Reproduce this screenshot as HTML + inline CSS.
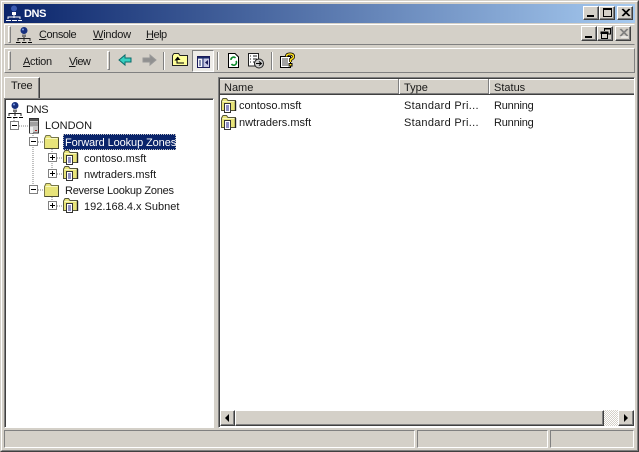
<!DOCTYPE html>
<html><head><meta charset="utf-8"><style>
html,body{margin:0;padding:0;width:639px;height:452px;overflow:hidden;background:#d4d0c8}
*{box-sizing:border-box}
body{position:relative;font:11px/13px "Liberation Sans",sans-serif;color:#000}
.a{position:absolute}
.t{position:absolute;white-space:nowrap;font-size:11px;line-height:13px;color:#181818}
u{text-decoration:underline}
.up{border:1px solid;border-color:#fff #808080 #808080 #fff}
.dn{border:1px solid;border-color:#808080 #fff #fff #808080}
.grip{position:absolute;width:3px;border:1px solid;border-color:#fff #808080 #808080 #fff}
.sep{position:absolute;width:2px;border-left:1px solid #808080;border-right:1px solid #fff}
.btn{position:absolute;background:#d4d0c8;border:1px solid;border-color:#fff #404040 #404040 #fff;box-shadow:inset -1px -1px 0 #808080}
svg{position:absolute;overflow:visible}
</style></head><body>
<svg width="0" height="0" style="position:absolute"><defs>
<g id="net"><circle cx="8" cy="3.5" r="3.5" fill="#17307e"/><circle cx="7" cy="2.5" r="1" fill="#7f9fe8"/><path d="M6 7.5H10V10H6Z" fill="#777"/><path d="M8 10V14M2 14V11.5H14V14" stroke="#222" fill="none"/><path d="M0 15.5H4.5M6 15.5H10.5M12 15.5H16" stroke="#000"/></g>
<g id="folder"><path d="M.5 3.5V13.5H14.5V2.5H7.5L6 .5H2Z" fill="#e8e47a" stroke="#77774a"/><path d="M1.5 3.5H13.5" stroke="#f8f8c0"/><path d="M14.5 3V13.5H1" stroke="#4a4a30" fill="none"/></g>
<g id="zone"><path d="M.5 3V12.5H14.5V2.5H7L5.5 .5H2Z" fill="#e8e47a" stroke="#55553a"/><path d="M1.5 3.5H13.5" stroke="#f8f8c0"/><path d="M14.5 3V13" stroke="#222" stroke-width="1.4"/><path d="M3.5 5.5H9.5V14.5H3.5Z" fill="#fff" stroke="#333"/><path d="M5 8H8M5 10H8M5 12H8" stroke="#22228a"/></g>
<g id="plus"><rect x=".5" y=".5" width="8" height="8" fill="#fff" stroke="#808080"/><path d="M2 4.5H7M4.5 2V7" stroke="#000"/></g>
<g id="minus"><rect x=".5" y=".5" width="8" height="8" fill="#fff" stroke="#808080"/><path d="M2 4.5H7" stroke="#000"/></g>
</defs></svg>

<!-- window edge -->
<div class="a" style="left:0;top:0;width:639px;height:452px;border:1px solid;border-color:#d4d0c8 #404040 #404040 #d4d0c8"></div>
<div class="a" style="left:1px;top:1px;width:637px;height:450px;border:1px solid;border-color:#fff #808080 #808080 #fff"></div>

<!-- title bar -->
<div class="a" style="left:4px;top:4px;width:631px;height:19px;background:linear-gradient(90deg,#0a246a 0%,#a6caf0 100%)"></div>
<svg style="left:6px;top:5px" width="16" height="16"><circle cx="8" cy="3.5" r="3" fill="#3a5ab0"/><path d="M6 7H10V10H6Z" fill="#fff"/><path d="M8 10V13M2 14V12H14V14" stroke="#fff" fill="none"/><path d="M0 15.5H5M6 15.5H11M12 15.5H16" stroke="#fff"/></svg>
<div class="t" style="left:24px;top:8px;color:#fff;font-weight:bold;letter-spacing:-.4px">DNS</div>
<div class="btn" style="left:583px;top:6px;width:16px;height:14px"><div class="a" style="left:3px;top:8px;width:7px;height:2px;background:#000"></div></div>
<div class="btn" style="left:599px;top:6px;width:16px;height:14px"><div class="a" style="left:3px;top:1px;width:9px;height:9px;border:1px solid #000;border-top-width:2px"></div></div>
<div class="btn" style="left:617px;top:6px;width:16px;height:14px"><svg style="left:3px;top:2px" width="9" height="8"><path d="M1 0L8 7M2 0L9 7M8 0L1 7M9 0L2 7" stroke="#000"/></svg></div>

<!-- menu bar -->
<div class="a up" style="left:4px;top:24px;width:631px;height:21px;border-right-color:#d4d0c8;border-bottom-color:#808080"></div>
<div class="grip" style="left:8px;top:26px;height:17px"></div>
<svg style="left:16px;top:27px" width="16" height="16"><use href="#net"/></svg>
<div class="t" style="left:39px;top:29px;letter-spacing:-.45px"><u>C</u>onsole</div>
<div class="t" style="left:93px;top:29px;letter-spacing:-.2px"><u>W</u>indow</div>
<div class="t" style="left:146px;top:29px;letter-spacing:-.5px"><u>H</u>elp</div>
<div class="btn" style="left:581px;top:26px;width:16px;height:15px"><div class="a" style="left:3px;top:9px;width:7px;height:2px;background:#000"></div></div>
<div class="btn" style="left:597px;top:26px;width:16px;height:15px"><svg style="left:3px;top:1px" width="10" height="10"><path d="M3.5 3V.5H9.5V6H7M3 1H9" stroke="#000" fill="none"/><path d="M.5 4.5H6.5V10.5H.5ZM0 4H7V5.5H0Z" stroke="#000" fill="none"/></svg></div>
<div class="btn" style="left:615px;top:26px;width:16px;height:15px"><svg style="left:3px;top:2px" width="9" height="8"><path d="M1 0L8 7M2 0L9 7M8 0L1 7M9 0L2 7" stroke="#808080"/><path d="M2 8L9 8" stroke="#fff"/></svg></div>

<!-- toolbar -->
<div class="a up" style="left:4px;top:48px;width:631px;height:25px;border-right-color:#808080"></div>
<div class="grip" style="left:8px;top:51px;height:19px"></div>
<div class="t" style="left:23px;top:56px;letter-spacing:-.3px"><u>A</u>ction</div>
<div class="t" style="left:69px;top:56px;letter-spacing:-.6px"><u>V</u>iew</div>
<div class="grip" style="left:107px;top:51px;height:19px"></div>
<svg style="left:118px;top:54px" width="16" height="14"><path d="M1 6L7 1V4H13V8H7V11Z" fill="#35d0c0" stroke="#0a6a6a"/></svg>
<svg style="left:141px;top:54px" width="16" height="14"><path d="M15 6L9 1V4H2V8H9V11Z" fill="#909090" stroke="#999"/></svg>
<div class="sep" style="left:163px;top:52px;height:18px"></div>
<svg style="left:172px;top:53px" width="16" height="13"><path d="M.5 2.5V12.5H15.5V2.5H8L6.5 .5H2Z" fill="#ffff99" stroke="#222"/><path d="M6 4L3.5 7H5V10H12" stroke="#000" fill="none"/><path d="M6 4L3.5 7H8.5Z" fill="#000"/></svg>
<div class="a" style="left:192px;top:50px;width:22px;height:22px;background:#eeece8;border:1px solid;border-color:#808080 #fff #fff #808080"></div>
<svg style="left:197px;top:56px" width="13" height="12"><rect x=".5" y=".5" width="12" height="11" fill="#c8c8e4" stroke="#1a1a5a"/><rect x="1" y="1" width="11" height="1.5" fill="#1a2a6a"/><rect x="5.5" y="2" width="1" height="9" fill="#1a2a6a"/><rect x="1" y="3" width="4" height="8" fill="#f4f4fa"/><path d="M2 5H4M2 7H4M2 9H4" stroke="#1a2a6a"/><path d="M11 4V9L8 6.5Z" fill="#1a1a5a"/></svg>
<div class="sep" style="left:217px;top:52px;height:18px"></div>
<svg style="left:228px;top:53px" width="11" height="15"><path d="M.5 .5H7L10.5 4V14.5H.5Z" fill="#fff" stroke="#000"/><path d="M3 7A2.6 2.6 0 0 1 7.5 5M8 8A2.6 2.6 0 0 1 3.5 11" stroke="#0a8a2a" stroke-width="1.6" fill="none"/></svg>
<svg style="left:248px;top:53px" width="16" height="15"><path d="M.5 .5H10.5V13H.5Z" fill="#fff" stroke="#222"/><path d="M2 3H3M5 3H9M2 6H3M5 6H9M2 9H3M5 9H7" stroke="#222"/><circle cx="11" cy="10.5" r="4.5" fill="#ccc" stroke="#222"/><path d="M8 10.5H13M11 8.5L13.5 10.5L11 12.5" stroke="#000" fill="none"/></svg>
<div class="sep" style="left:271px;top:52px;height:18px"></div>
<svg style="left:280px;top:53px" width="15" height="15"><path d="M.5 3.5H10.5V14.5H.5Z" fill="#fff" stroke="#000"/><path d="M2 6H8M2 8H8M2 10H8M2 12H8" stroke="#444"/><path d="M6.5 3.5Q6.5 1 10 1T13.5 3.5Q13.5 5.5 10.5 6.5V9" stroke="#000" stroke-width="3" fill="none"/><path d="M6.5 3.5Q6.5 1 10 1T13.5 3.5Q13.5 5.5 10.5 6.5V9" stroke="#ffe020" stroke-width="1.6" fill="none"/><path d="M9 10.5H12V13H9Z" fill="#ffe020" stroke="#000"/></svg>

<!-- tab -->
<div class="a" style="left:4px;top:77px;width:36px;height:22px;background:#d4d0c8;border:1px solid;border-color:#fff #404040 #d4d0c8 #fff;box-shadow:inset -1px 0 0 #808080"></div>
<div class="t" style="left:11px;top:80px;letter-spacing:-.2px">Tree</div>

<!-- tree pane -->
<div class="a" style="left:4px;top:98px;width:210px;height:330px;background:#fff;border:1px solid;border-color:#808080 #fff #fff #808080;box-shadow:inset 1px 1px 0 #404040"></div>
<div class="a" style="left:214px;top:98px;width:1px;height:330px;background:#d4d0c8"></div>
<!-- tree lines -->
<svg style="left:0;top:0" width="214" height="240"><path d="M14 118V121M19 126H28M33 131V190M38 142H44M38 190H44M52 147V174M57 158H63M57 174H63M52 195V201M57 206H63" stroke="#808080" stroke-dasharray="1 1" fill="none"/></svg>
<svg style="left:7px;top:102px" width="16" height="16"><use href="#net"/></svg>
<div class="t" style="left:26px;top:104px;letter-spacing:-.3px">DNS</div>
<svg style="left:10px;top:121px" width="9" height="9"><use href="#minus"/></svg>
<svg style="left:29px;top:118px" width="10" height="16"><rect x=".5" y=".5" width="9" height="14.5" fill="#c8c8c8" stroke="#333"/><rect x="1" y="1" width="8" height="2" fill="#555"/><path d="M1 5H9M1 7H9" stroke="#777"/><path d="M1 9H4V15H1Z" fill="#eee"/><rect x="6" y="12" width="2" height="1" fill="#b02020"/></svg>
<div class="t" style="left:45px;top:120px">LONDON</div>
<svg style="left:29px;top:137px" width="9" height="9"><use href="#minus"/></svg>
<svg style="left:44px;top:135px" width="16" height="15"><use href="#folder"/></svg>
<div class="a" style="left:63px;top:134px;width:113px;height:16px;background:#0a246a;outline:1px dotted #c0c0c0;outline-offset:-1px"></div>
<div class="t" style="left:65px;top:137px;color:#fff;letter-spacing:-.1px">Forward Lookup Zones</div>
<svg style="left:48px;top:153px" width="9" height="9"><use href="#plus"/></svg>
<svg style="left:63px;top:150px" width="16" height="16"><use href="#zone"/></svg>
<div class="t" style="left:84px;top:153px">contoso.msft</div>
<svg style="left:48px;top:169px" width="9" height="9"><use href="#plus"/></svg>
<svg style="left:63px;top:166px" width="16" height="16"><use href="#zone"/></svg>
<div class="t" style="left:84px;top:169px">nwtraders.msft</div>
<svg style="left:29px;top:185px" width="9" height="9"><use href="#minus"/></svg>
<svg style="left:44px;top:183px" width="16" height="15"><use href="#folder"/></svg>
<div class="t" style="left:65px;top:185px;letter-spacing:-.25px">Reverse Lookup Zones</div>
<svg style="left:48px;top:201px" width="9" height="9"><use href="#plus"/></svg>
<svg style="left:63px;top:198px" width="16" height="16"><use href="#zone"/></svg>
<div class="t" style="left:84px;top:201px">192.168.4.x Subnet</div>

<!-- list pane -->
<div class="a" style="left:218px;top:77px;width:417px;height:351px;background:#fff;border:1px solid;border-color:#808080 #fff #fff #808080;box-shadow:inset 1px 1px 0 #404040"></div>
<div class="a" style="left:220px;top:79px;width:414px;height:15px;background:#d4d0c8;border-top:1px solid #fff;border-bottom:1px solid #808080;box-shadow:0 1px 0 #404040"></div>
<div class="a" style="left:398px;top:79px;width:2px;height:15px;background:#808080;border-right:1px solid #fff"></div>
<div class="a" style="left:488px;top:79px;width:2px;height:15px;background:#808080;border-right:1px solid #fff"></div>
<div class="t" style="left:224px;top:82px">Name</div>
<div class="t" style="left:404px;top:82px">Type</div>
<div class="t" style="left:494px;top:82px">Status</div>
<svg style="left:221px;top:98px" width="16" height="16"><use href="#zone"/></svg>
<div class="t" style="left:239px;top:100px">contoso.msft</div>
<div class="t" style="left:404px;top:100px;letter-spacing:.3px">Standard Pri...</div>
<div class="t" style="left:494px;top:100px;letter-spacing:-.2px">Running</div>
<svg style="left:221px;top:115px" width="16" height="16"><use href="#zone"/></svg>
<div class="t" style="left:239px;top:117px">nwtraders.msft</div>
<div class="t" style="left:404px;top:117px;letter-spacing:.3px">Standard Pri...</div>
<div class="t" style="left:494px;top:117px;letter-spacing:-.2px">Running</div>

<!-- scrollbar -->
<div class="a" style="left:220px;top:410px;width:414px;height:16px;background-color:#ece9e4;background-image:repeating-conic-gradient(#d4d0c8 0 25%,#fff 0 50%);background-size:2px 2px"></div>
<div class="btn" style="left:220px;top:410px;width:15px;height:16px"><svg style="left:4px;top:3px" width="5" height="8"><path d="M4 0V8L0 4Z" fill="#000"/></svg></div>
<div class="btn" style="left:235px;top:410px;width:369px;height:16px"></div>
<div class="btn" style="left:618px;top:410px;width:16px;height:16px"><svg style="left:5px;top:3px" width="5" height="8"><path d="M0 0V8L4 4Z" fill="#000"/></svg></div>

<!-- status bar -->
<div class="a dn" style="left:4px;top:430px;width:411px;height:18px"></div>
<div class="a dn" style="left:417px;top:430px;width:131px;height:18px"></div>
<div class="a dn" style="left:550px;top:430px;width:84px;height:18px"></div>
</body></html>
